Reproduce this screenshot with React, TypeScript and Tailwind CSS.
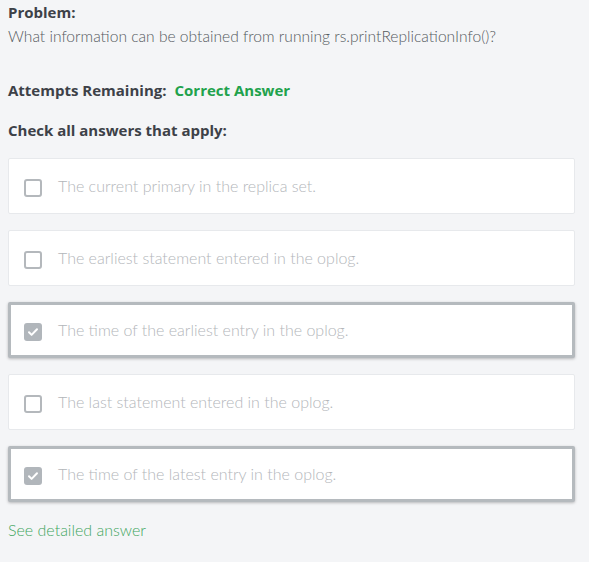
const options = [
  { text: "The current primary in the replica set.", checked: false },
  { text: "The earliest statement entered in the oplog.", checked: false },
  { text: "The time of the earliest entry in the oplog.", checked: true },
  { text: "The last statement entered in the oplog.", checked: false },
  { text: "The time of the latest entry in the oplog.", checked: true },
];

function Checkbox({ checked }: { checked: boolean }) {
  if (checked) {
    return (
      <span className="flex h-[18px] w-[18px] shrink-0 items-center justify-center rounded-[3px] bg-[#b1b6bb]">
        <svg width="12" height="12" viewBox="0 0 12 12" fill="none">
          <path d="M2 6.3l2.6 2.6L10 3.3" stroke="#fff" strokeWidth="2" strokeLinecap="round" strokeLinejoin="round" />
        </svg>
      </span>
    );
  }
  return <span className="block h-[18px] w-[18px] shrink-0 rounded-[3px] border-2 border-[#b4b8bc] bg-white" />;
}

export default function App() {
  return (
    <div className="min-h-[562px] bg-[#f4f5f7] px-2 pt-[1px] text-[15px]" style={{ fontFamily: "Lato, 'Liberation Sans', sans-serif" }}>
      <h3 className="font-['Open_Sans',sans-serif] font-bold leading-[22px] text-[#3d4148]">Problem:</h3>
      <p className="mt-[2px] text-[15.6px] font-light leading-[22px] text-[#555a60]">
        What information can be obtained from running rs.printReplicationInfo()?
      </p>

      <div className="mt-[32px] flex gap-[8px] font-['Open_Sans',sans-serif] font-bold leading-[22px]">
        <span className="text-[#3d4148]">Attempts Remaining:</span>
        <span className="text-[#21a24c]">Correct Answer</span>
      </div>

      <p className="mt-[18px] font-['Open_Sans',sans-serif] font-bold leading-[22px] text-[#3d4148]">Check all answers that apply:</p>

      <div className="mt-[17px] flex w-[567px] flex-col gap-[16px]">
        {options.map((o) => (
          <label
            key={o.text}
            className={
              o.checked
                ? "flex h-[56px] items-center gap-[16px] rounded-[2px] border-[3px] border-[#b5babe] bg-white pl-[13px] shadow-[0_1px_3px_rgba(0,0,0,0.25)]"
                : "flex h-[56px] items-center gap-[16px] rounded-[2px] border border-[#e7e9ec] bg-white pl-[15px]"
            }
          >
            <span className="mt-[3px]">
              <Checkbox checked={o.checked} />
            </span>
            <span className="text-[16px] font-light text-[#b3b6ba]">{o.text}</span>
          </label>
        ))}
      </div>

      <a className="mt-[17px] block text-[16px] font-light leading-[22px] text-[#3fa55e]">See detailed answer</a>
    </div>
  );
}
